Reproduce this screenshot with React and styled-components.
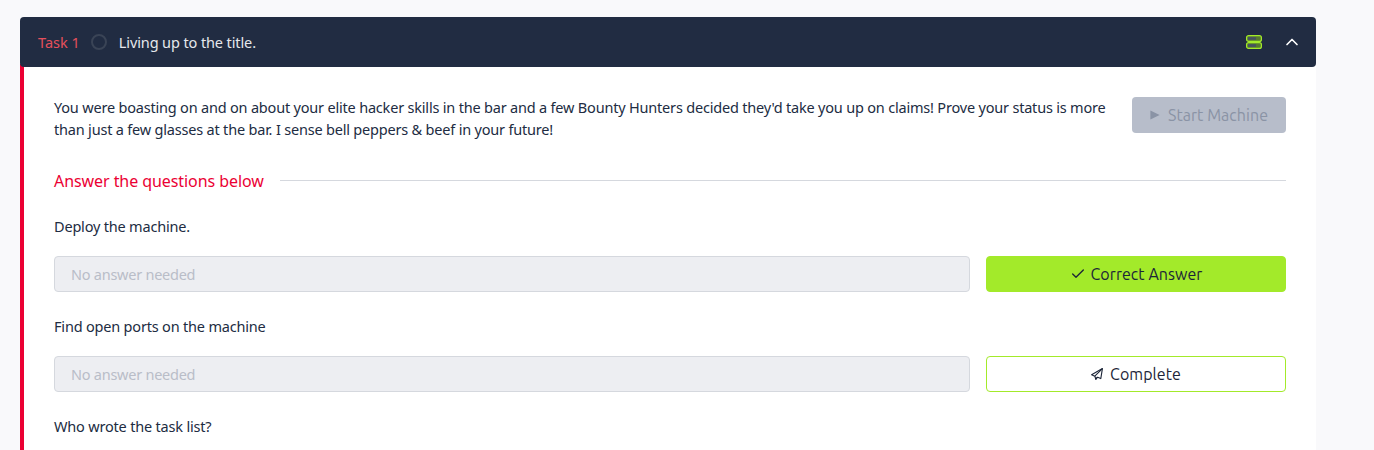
import React from 'react'
import styled, { createGlobalStyle } from 'styled-components'
import { Check, ChevronUp } from 'lucide-react'

const Global = createGlobalStyle`
  html, body {
    margin: 0;
    height: 450px;
    overflow: hidden;
    background: #f9f9fb;
    font-family: "Noto Sans", "Liberation Sans", sans-serif;
  }
`

const Page = styled.div`
  padding: 17px 58px 0 20px;
`

const Header = styled.div`
  height: 50px;
  background: #212c42;
  border-radius: 4px;
  display: flex;
  align-items: center;
  padding: 0 14px 0 18px;
  position: relative;
`

const TaskNo = styled.span`
  color: #e5505c;
  font-size: 14.5px;
`

const StatusRing = styled.span`
  width: 12px;
  height: 12px;
  border: 2px solid #3a4456;
  border-radius: 50%;
  margin: 0 12px 0 11px;
`

const TaskTitle = styled.span`
  color: #e6e8ec;
  font-size: 14.5px;
  letter-spacing: -0.11px;
  flex: 1;
`

const ChevronBtn = styled.span`
  display: flex;
  margin-left: 20px;
  color: #fff;
`

const Body = styled.div`
  background: #fff;
  border-left: 4px solid #eb0033;
  padding: 33px 30px 0;
  margin-top: -3px;
  height: 386px;
  box-sizing: border-box;
`

const Intro = styled.div`
  display: flex;
  justify-content: space-between;
  gap: 20px;
`

const IntroText = styled.p`
  margin: -1px 0 0;
  color: #212c42;
  font-size: 14.5px;
  line-height: 22px;
  letter-spacing: -0.195px;
  flex: 1;
`

const BaseButton = styled.div`
  font-family: "Ubuntu", "Noto Sans", sans-serif;
  height: 36px;
  box-sizing: border-box;
  border-radius: 4px;
  display: flex;
  align-items: center;
  justify-content: center;
  font-size: 16px;
  letter-spacing: 0.05px;
`

const StartButton = styled(BaseButton)`
  width: 154px;
  flex: none;
  background: #b7bdca;
  color: #8a93a5;
  gap: 8px;
`

const SectionTitle = styled.div`
  display: flex;
  align-items: center;
  gap: 16px;
  margin-top: 29px;
  color: #eb0033;
  font-size: 16px;
  line-height: 24px;
  letter-spacing: -0.07px;
  &::after {
    content: '';
    flex: 1;
    height: 1px;
    margin-top: -2px;
    background: #d5d8de;
  }
`

const Question = styled.div`
  color: #212c42;
  font-size: 14.5px;
  line-height: 22px;
  letter-spacing: -0.19px;
  margin-top: ${props => props.$top}px;
`

const AnswerRow = styled.div`
  display: flex;
  gap: 16px;
  margin-top: 19px;
`

const AnswerInput = styled.div`
  flex: 1;
  height: 36px;
  box-sizing: border-box;
  background: #edeef2;
  border: 1px solid #d5d8de;
  border-radius: 4px;
  color: #b9bdc8;
  font-size: 14.5px;
  letter-spacing: -0.25px;
  display: flex;
  align-items: center;
  padding-left: 16px;
`

const SubmitButton = styled(BaseButton)`
  width: 300px;
  flex: none;
  gap: ${props => (props.$done ? 5 : 7)}px;
  color: #1c2538;
  background: ${props => (props.$done ? '#a3ea2a' : '#fff')};
  border: 1px solid #a3ea2a;
`

function ServerIcon() {
  return (
    <svg width="16" height="14" viewBox="0 0 16 14" fill="none">
      <rect x="0.6" y="0.6" width="14.8" height="5.8" rx="2" fill="#567a2f" stroke="#a3ea2a" strokeWidth="1.2" />
      <rect x="2" y="2.2" width="8" height="2.6" fill="#465162" />
      <rect x="0.6" y="7.6" width="14.8" height="5.8" rx="2" fill="#567a2f" stroke="#a3ea2a" strokeWidth="1.2" />
      <rect x="2" y="9.2" width="8" height="2.6" fill="#465162" />
    </svg>
  )
}

function PlayIcon() {
  return (
    <svg width="10" height="10" viewBox="0 0 10 10" fill="#8a93a5">
      <path d="M0.4 0.5 9.6 5 0.4 9.5Z" />
    </svg>
  )
}

function PlaneIcon() {
  return (
    <svg width="12" height="12" viewBox="0 0 12 12" fill="none" stroke="#1c2538" strokeWidth="1.1" strokeLinejoin="round">
      <path d="M11.4 0.6 0.6 6.8 3.8 8.2 4.8 11.4 6.6 9.2 9.8 10.6Z" />
      <path d="M11.4 0.6 3.8 8.2M4.8 11.4 5.2 8.8" />
    </svg>
  )
}

export default function App() {
  return (
    <Page>
      <Global />
      <Header>
        <TaskNo>Task 1</TaskNo>
        <StatusRing />
        <TaskTitle>Living up to the title.</TaskTitle>
        <ServerIcon />
        <ChevronBtn><ChevronUp size={20} strokeWidth={2} /></ChevronBtn>
      </Header>
      <Body>
        <Intro>
          <IntroText>
            You were boasting on and on about your elite hacker skills in the bar and a few Bounty Hunters decided they'd take you up on claims! Prove your status is more than just a few glasses at the bar. I sense bell peppers &amp; beef in your future!
          </IntroText>
          <StartButton>
            <PlayIcon />
            Start Machine
          </StartButton>
        </Intro>
        <SectionTitle>Answer the questions below</SectionTitle>
        <Question $top={22}>Deploy the machine.</Question>
        <AnswerRow>
          <AnswerInput>No answer needed</AnswerInput>
          <SubmitButton $done><Check size={16} />Correct Answer</SubmitButton>
        </AnswerRow>
        <Question $top={23}>Find open ports on the machine</Question>
        <AnswerRow>
          <AnswerInput>No answer needed</AnswerInput>
          <SubmitButton><PlaneIcon />Complete</SubmitButton>
        </AnswerRow>
        <Question $top={23}>Who wrote the task list?</Question>
      </Body>
    </Page>
  )
}
